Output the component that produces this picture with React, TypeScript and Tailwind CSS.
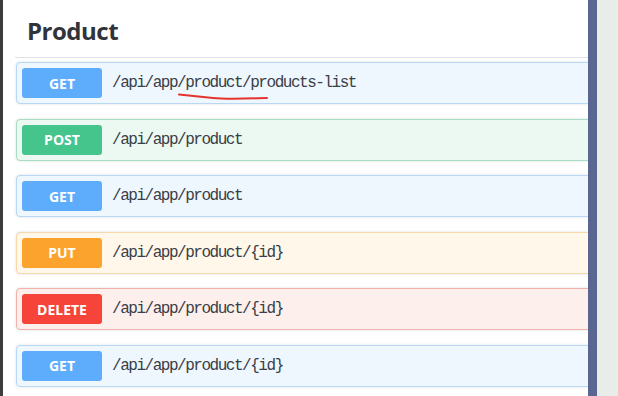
import React from "react";

type Op = { method: string; path: string; badge: string; bg: string; border: string };

const ops: Op[] = [
  { method: "GET", path: "/api/app/product/products-list", badge: "bg-[#5eadfd]", bg: "bg-[#eef7fe]", border: "border-[#b8d8f5]" },
  { method: "POST", path: "/api/app/product", badge: "bg-[#45c58c]", bg: "bg-[#ebf9f2]", border: "border-[#a7dec3]" },
  { method: "GET", path: "/api/app/product", badge: "bg-[#5eadfd]", bg: "bg-[#eef7fe]", border: "border-[#b8d8f5]" },
  { method: "PUT", path: "/api/app/product/{id}", badge: "bg-[#fca32e]", bg: "bg-[#fff7ea]", border: "border-[#f6d8ab]" },
  { method: "DELETE", path: "/api/app/product/{id}", badge: "bg-[#f7443a]", bg: "bg-[#fdefec]", border: "border-[#f0b2aa]" },
  { method: "GET", path: "/api/app/product/{id}", badge: "bg-[#5eadfd]", bg: "bg-[#eef7fe]", border: "border-[#b8d8f5]" },
];

export default function App() {
  return (
    <div className="flex h-[396px] w-[618px] overflow-hidden bg-white">
      <div className="w-[3px] shrink-0 bg-[#3c3c3c]" />
      <div className="flex-1 overflow-hidden bg-white pl-[12px]">
        <div
          className="border-b border-[#dfe1e4] pb-[10px] pl-[12px] pt-[14px] text-[24px] font-bold leading-[33px] tracking-[-0.5px] text-[#30343a]"
          style={{ fontFamily: '"Open Sans", "Noto Sans", sans-serif' }}
        >
          Product
        </div>
        <div className="mt-[4px] ml-[1px] mr-[-10px] flex flex-col gap-[14.6px]">
          {ops.map((op, i) => (
            <div
              key={i}
              className={`relative flex h-[42px] items-center rounded-[4px] border ${op.bg} ${op.border} p-[5px] shadow-[0_0_3px_rgba(0,0,0,0.12)]`}
            >
              <div
                className={`flex h-[30px] w-[80px] shrink-0 items-center justify-center rounded-[3px] ${op.badge} text-[14px] font-bold text-white`}
                style={{ fontFamily: '"Open Sans", "Noto Sans", sans-serif' }}
              >
                {op.method}
              </div>
              <div
                className="pl-[10px] text-[16px] tracking-[-1.47px] text-[#3a3e48]"
                style={{ fontFamily: '"Liberation Mono", "DejaVu Sans Mono", monospace' }}
              >
                {op.path}
              </div>
              {i === 0 && (
                <svg
                  className="absolute left-[161px] top-[30px]"
                  width="92"
                  height="8"
                  viewBox="0 0 92 8"
                >
                  <path
                    d="M1 1.5 C 10 2.5, 20 3.5, 35 5 S 70 5.5, 89 5"
                    fill="none"
                    stroke="#e5342e"
                    strokeWidth="2"
                    strokeLinecap="round"
                  />
                </svg>
              )}
            </div>
          ))}
        </div>
      </div>
      <div className="w-[9px] shrink-0 bg-[#5a6591]" />
      <div className="w-[21px] shrink-0 bg-[#e9ede9]" />
    </div>
  );
}
